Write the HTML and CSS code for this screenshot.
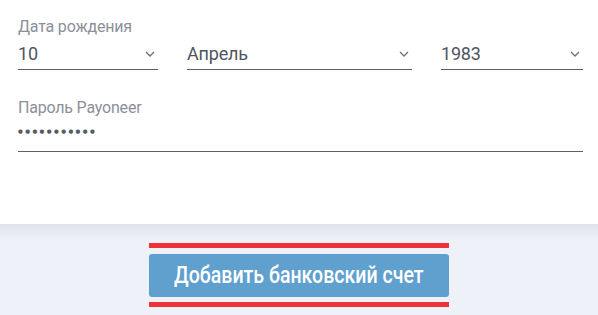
FILE: index.html
```html
<!DOCTYPE html>
<html lang="ru">
<head>
    <meta charset="UTF-8">
    <title>Добавить банковский счет</title>
    <link rel="stylesheet" href="styles.css">
</head>
<body>
    <div class="form">
        <div class="field">
            <div class="label">Дата рождения</div>
            <div class="dob">
                <div class="select">
                    <span class="value">10</span>
                    <svg class="chevron" width="10" height="6" viewBox="0 0 10 6"><path d="M1 1l4 4 4-4" fill="none" stroke="#6b707a" stroke-width="1.3"/></svg>
                </div>
                <div class="select">
                    <span class="value">Апрель</span>
                    <svg class="chevron" width="10" height="6" viewBox="0 0 10 6"><path d="M1 1l4 4 4-4" fill="none" stroke="#6b707a" stroke-width="1.3"/></svg>
                </div>
                <div class="select">
                    <span class="value">1983</span>
                    <svg class="chevron" width="10" height="6" viewBox="0 0 10 6"><path d="M1 1l4 4 4-4" fill="none" stroke="#6b707a" stroke-width="1.3"/></svg>
                </div>
            </div>
        </div>
        <div class="field password">
            <div class="label">Пароль Payoneer</div>
            <div class="input"><span class="dots">●●●●●●●●●●●</span></div>
        </div>
    </div>
    <div class="footer">
        <div class="mark"></div>
        <button class="submit"><span>Добавить банковский счет</span></button>
        <div class="mark"></div>
    </div>
</body>
</html>
```

FILE: styles.css
```css
body {
    margin: 0;
    font-family: Roboto, "Liberation Sans", sans-serif;
    background: #eef2f8;
}
.form {
    background: #fff;
    height: 224px;
    box-sizing: border-box;
    padding: 17px 15px 0 18px;
}
.label {
    color: #8b909a;
    font-size: 16px;
    letter-spacing: -0.2px;
    line-height: 20px;
}
.dob {
    display: grid;
    grid-template-columns: 140px 1fr 142px;
    gap: 29px;
}
.select {
    display: flex;
    align-items: center;
    justify-content: space-between;
    height: 32px;
    border-bottom: 1px solid #5c6068;
}
.value {
    color: #4f5561;
    font-size: 18px;
    letter-spacing: -0.2px;
}
.chevron {
    margin-right: 3px;
    margin-top: 1px;
}
.password {
    margin-top: 28px;
}
.input {
    height: 33px;
    border-bottom: 1px solid #5c6068;
}
.dots {
    display: inline-block;
    margin-top: 5px;
    color: #555a64;
    font-family: "DejaVu Sans", sans-serif;
    font-size: 5.5px;
    letter-spacing: 2.4px;
    line-height: 14px;
}
.footer {
    display: flex;
    flex-direction: column;
    align-items: center;
    padding-top: 19px;
    height: 91px;
    box-sizing: border-box;
    background: linear-gradient(#dfe3e8, #eef2f8 16px);
}
.mark {
    width: 300px;
    height: 5px;
    background: #ee3237;
}
.submit {
    width: 300px;
    height: 43px;
    margin: 6px 0 5px;
    padding: 0;
    border: 0;
    border-radius: 3px;
    background: #5fa0cf;
    color: #fff;
    font-family: Roboto, "Liberation Sans", sans-serif;
    font-size: 23px;
    font-weight: 500;
}
.submit span {
    display: inline-block;
    transform: scaleX(0.85);
    white-space: nowrap;
}
```
